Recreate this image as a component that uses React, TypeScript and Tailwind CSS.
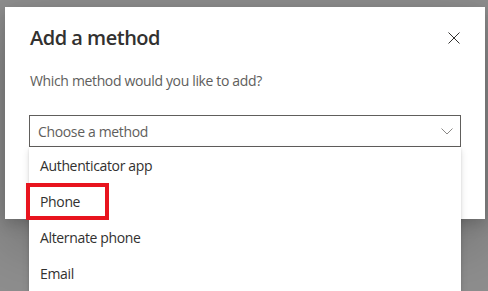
import React from "react";

const font = { fontFamily: '"Open Sans", "Noto Sans", Arial, sans-serif' };

export default function App() {
  const items = ["Authenticator app", "Phone", "Alternate phone", "Email"];
  return (
    <div
      className="relative w-[488px] h-[291px] overflow-hidden bg-[#8e8e8e] pt-[7px] pl-[5px]"
      style={font}
    >
      <div className="relative w-[480px] h-[212px] bg-white px-6 pt-[17px] shadow-[0_25px_58px_rgba(0,0,0,0.22),0_5px_14px_rgba(0,0,0,0.18)]">
        <div className="flex items-start justify-between">
          <h1 className="text-[20px] leading-[28px] font-semibold text-[#323130] pl-[1px] tracking-[-0.5px]">
            Add a method
          </h1>
          <button className="mt-[8px] mr-[1px] text-[#323130]" aria-label="Close">
            <svg width="12" height="12" viewBox="0 0 12 12" fill="none">
              <path d="M0.5 0.5L11.5 11.5M11.5 0.5L0.5 11.5" stroke="#323130" strokeWidth="1" />
            </svg>
          </button>
        </div>
        <p className="mt-[19px] text-[14px] leading-[20px] text-[#605e5c] pl-[1px] tracking-[-0.35px]">
          Which method would you like to add?
        </p>
        <div className="mt-[24px] h-[32px] border border-[#605e5c] flex items-center justify-between pl-[8px] pr-[7px]">
          <span className="text-[14px] text-[#605e5c] tracking-[-0.35px]">Choose a method</span>
          <svg width="12" height="7" viewBox="0 0 12 7" fill="none">
            <path d="M0.5 0.5L6 6L11.5 0.5" stroke="#8a8886" strokeWidth="1" />
          </svg>
        </div>
        <div className="absolute left-6 top-[140px] w-[432px] bg-white shadow-[0_3px_7px_rgba(0,0,0,0.13),0_1px_2px_rgba(0,0,0,0.11)]">
          {items.map((it) => (
            <div
              key={it}
              className="h-[36px] flex items-center pl-[11px] text-[14px] text-[#323130] tracking-[-0.35px]"
            >
              {it}
            </div>
          ))}
        </div>
      </div>
      <div className="absolute left-[26px] top-[183px] w-[83px] h-[37px] border-[4px] border-[#e8141e]" />
    </div>
  );
}
